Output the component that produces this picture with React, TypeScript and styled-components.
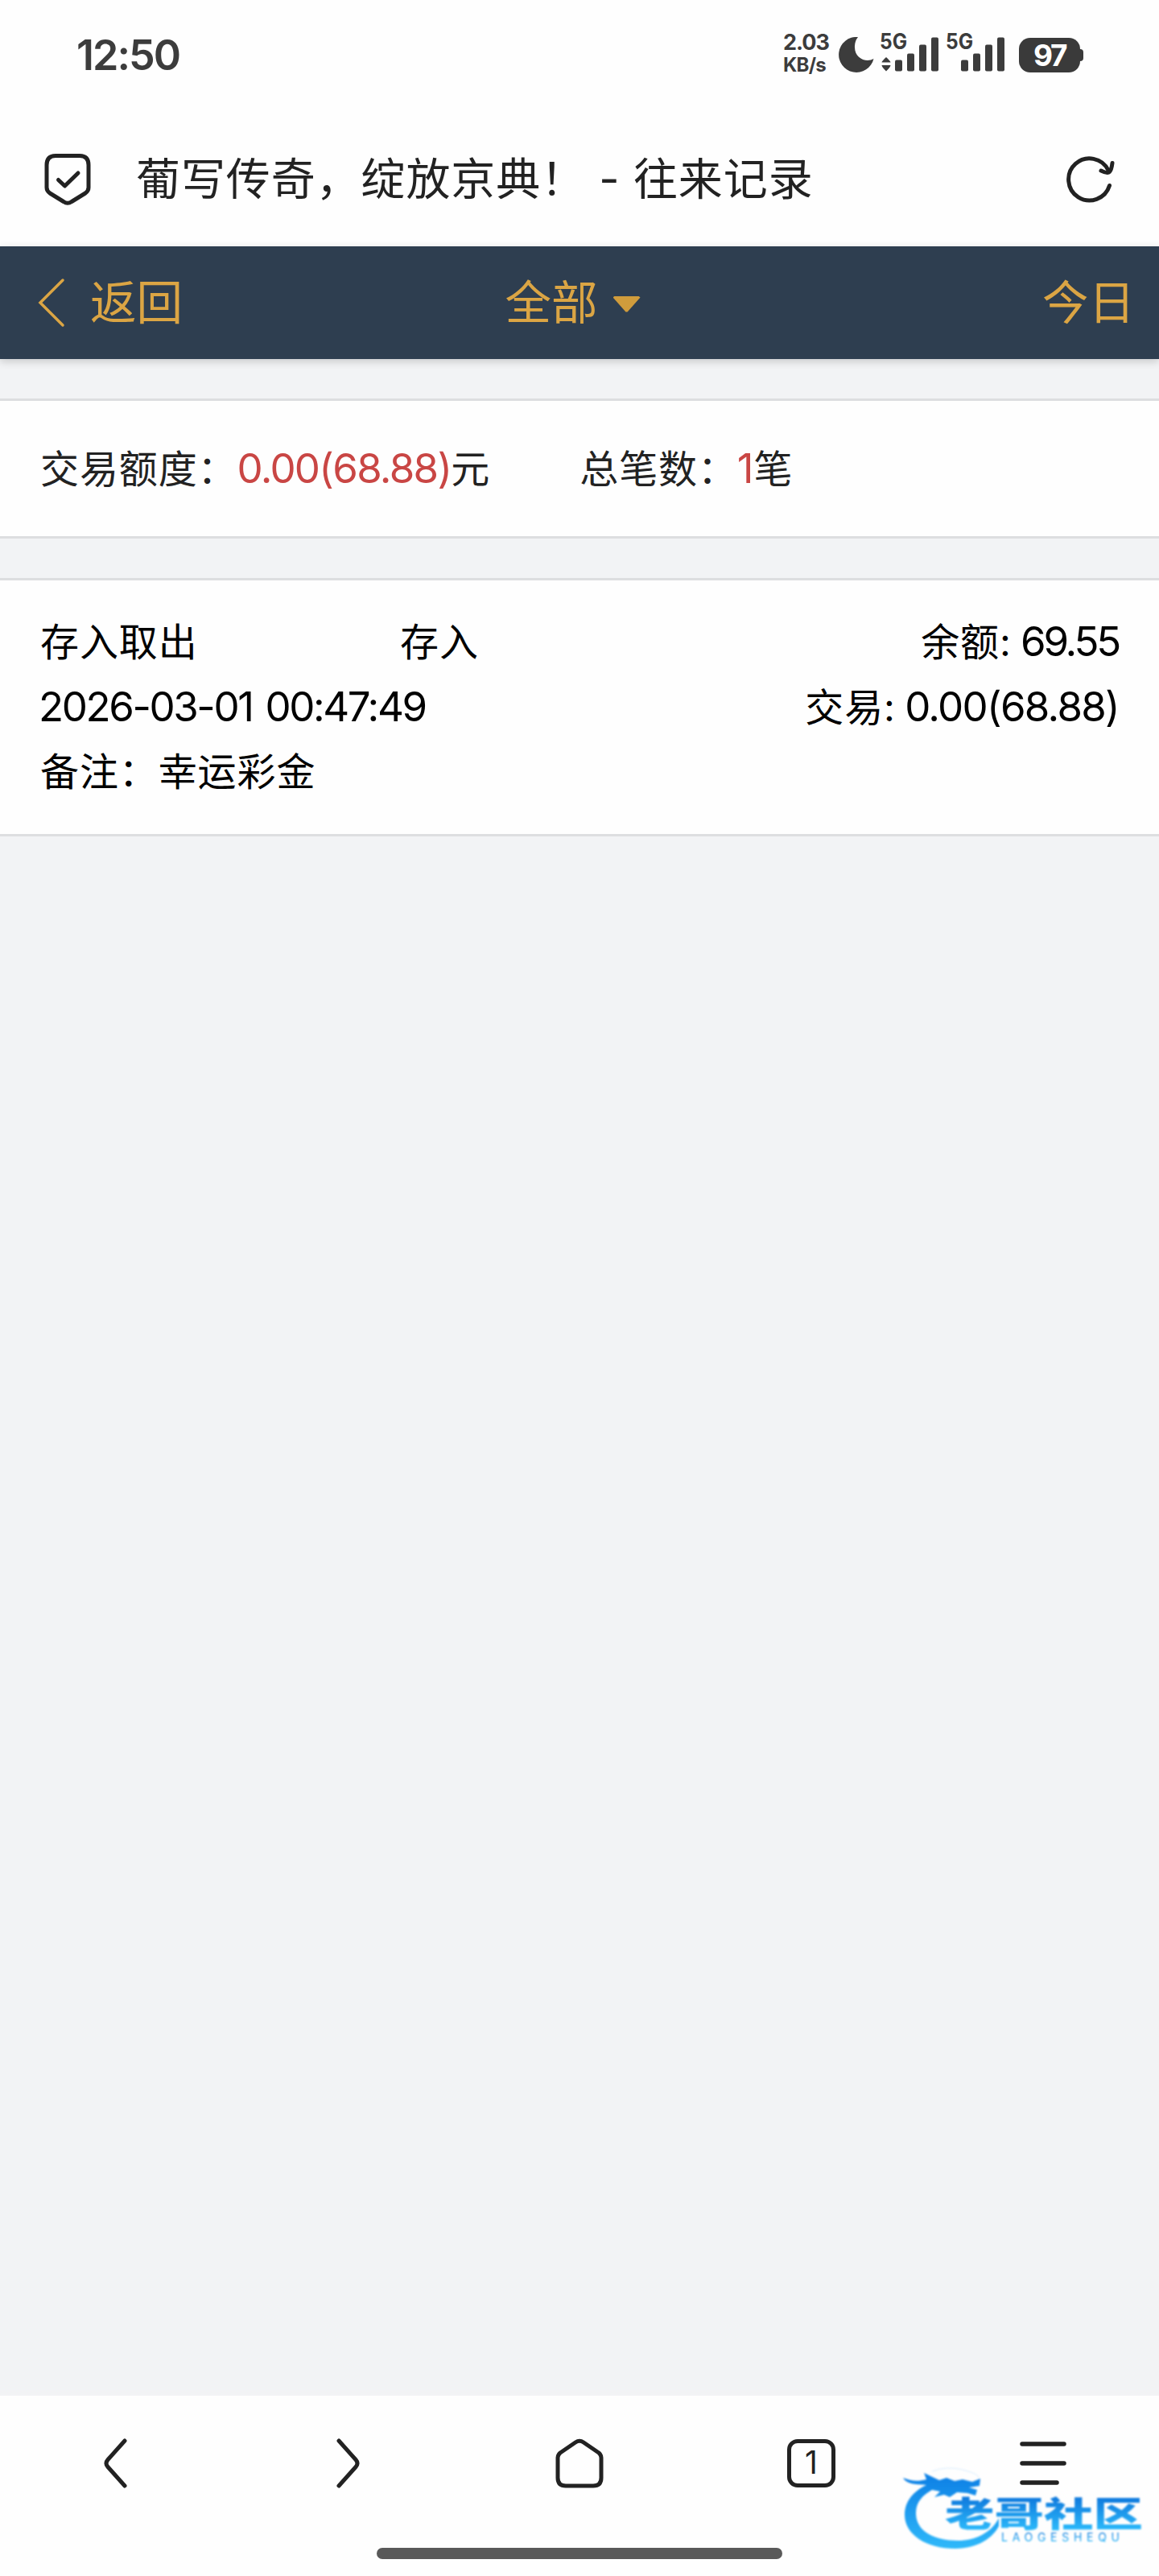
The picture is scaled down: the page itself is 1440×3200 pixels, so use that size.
import React from 'react';
import styled, { createGlobalStyle } from 'styled-components';

interface RecordItem {
  id: number;
  type: string;
  action: string;
  balance: string;
  time: string;
  amount: string;
  remark: string;
}

const records: RecordItem[] = [
  {
    id: 1,
    type: '存入取出',
    action: '存入',
    balance: '69.55',
    time: '2026-03-01 00:47:49',
    amount: '0.00(68.88)',
    remark: '幸运彩金',
  },
];

const BARS = [14, 22, 33, 42];

const Signal: React.FC<{ active?: boolean }> = ({ active }) => (
  <SignalIcon viewBox="0 -10 74 60">
    <text x="-1" y="20.5" textLength="34" lengthAdjust="spacingAndGlyphs">
      5G
    </text>
    {active && (
      <path d="M1.5 37.5Q1.5 36 7 31Q12.5 36 12.5 37.5ZM1.5 41Q1.5 43 7 48.5Q12.5 43 12.5 41Z" />
    )}
    {BARS.map((h, i) => (
      <rect key={h} x={18 + i * 15} y={48.5 - h} width="9" height={h} rx="2" />
    ))}
  </SignalIcon>
);

const StatusBar: React.FC = () => (
  <StatusWrapper>
    <Clock>12:50</Clock>
    <Speed>
      <span>2.03</span>
      <SpeedUnit>KB/s</SpeedUnit>
    </Speed>
    <Moon viewBox="0 0 44 44">
      <path d="M24 0A19 19 0 0 0 20 13C20 23 28 29 36 29Q40 29 43.5 27A22 22 0 1 1 24 0Z" />
    </Moon>
    <Signal active />
    <Signal />
    <Battery>97</Battery>
    <BatteryTip />
  </StatusWrapper>
);

//주소창
const AddressBar: React.FC = () => (
  <AddressWrapper>
    <LineIcon width="62" height="68" viewBox="0 0 62 68" $stroke={5}>
      <path d="M16 5.5H46Q57 5.5 57 17V45Q57 49 53 52L36 62.5Q31 66 26 62.5L9 52Q5 49 5 45V17Q5 5.5 16 5.5Z" />
      <path d="M19.5 35.5L27.5 43L44 27" />
    </LineIcon>
    <PageTitle>葡写传奇，绽放京典！ - 往来记录</PageTitle>
    <LineIcon width="64" height="64" viewBox="0 0 64 64" $stroke={5}>
      <path d="M56.5 40.500A26 26 0 1 1 55 21.500" />
      <path d="M46 22Q54 26 56.500 23.500T60 12.500" />
    </LineIcon>
  </AddressWrapper>
);

const Record: React.FC<{ item: RecordItem }> = ({ item }) => (
  <RecordCard>
    <Row>
      <TypeCell>{item.type}</TypeCell>
      <span>{item.action}</span>
      <RightCell>
        余额: <BalanceNum>{item.balance}</BalanceNum>
      </RightCell>
    </Row>
    <Row>
      <DateNum>{item.time}</DateNum>
      <RightCell>
        交易: <Num>{item.amount}</Num>
      </RightCell>
    </Row>
    <Row>备注：{item.remark}</Row>
  </RecordCard>
);

const Watermark: React.FC = () => (
  <WatermarkIcon viewBox="0 0 310 116">
    <defs>
      <linearGradient id="wm" x1="0" y1="0" x2="0" y2="1">
        <stop offset="0.1" stopColor="#0f78dc" />
        <stop offset="0.9" stopColor="#2cbafb" />
      </linearGradient>
      <linearGradient id="ring" gradientUnits="userSpaceOnUse" x1="0" y1="20" x2="0" y2="108">
        <stop offset="0" stopColor="#0f82e6" />
        <stop offset="1" stopColor="#2fb9fa" />
      </linearGradient>
    </defs>
    <path
      fill="url(#ring)"
      d="M31 29C14 37 4 50 4 66C4 90 30 108 67 108C95 108 114 94 121 80V70C112 88 92 98 70 98C40 98 18 86 18 64C18 50 26 42 38 35L48 37L41 44L53 41L60 44L69 38L82 39L92 42L94 35L84 32L97 30L98 21L88 25L76 22L66 24L56 20L47 23L28 14L31 22C20 25 12 24 2 20C7 29 20 28 31 29Z"
    />
    <path stroke="#d9ecfc" strokeWidth="1" fill="none" d="M38 12Q56 5 76 10T96 20" />
    <g fill="url(#wm)">
      <text
        x="54"
        y="80.5"
        fontSize="43"
        fontWeight="900"
        textLength="246"
        lengthAdjust="spacingAndGlyphs"
      >
        老哥社区
      </text>
      <text x="124" y="99" fontSize="14" textLength="147">
        LAOGESHEQU
      </text>
    </g>
  </WatermarkIcon>
);

const BottomBar: React.FC = () => (
  <BottomWrapper>
    <Tools>
      <LineIcon width="72" height="72" viewBox="0 0 72 72" $stroke={5}>
        <path d="M47 8L26 31.5Q22 36 26 40.5L47 64" />
      </LineIcon>
      <LineIcon width="72" height="72" viewBox="0 0 72 72" $stroke={5}>
        <path d="M25 8L46 31.5Q50 36 46 40.5L25 64" />
      </LineIcon>
      <LineIcon width="72" height="72" viewBox="0 0 72 72" $stroke={5}>
        <path d="M31 10Q36 6.5 41 10L60 23Q63 25.5 63 29V54Q63 64 53 64H19Q9 64 9 54V29Q9 25.5 12 23Z" />
      </LineIcon>
      <TabCount>1</TabCount>
      <LineIcon width="72" height="72" viewBox="0 0 72 72" $stroke={5.5}>
        <path d="M10 12H62M10 36H62M10 60H53" />
      </LineIcon>
    </Tools>
    <HomeIndicator />
    <Watermark />
  </BottomWrapper>
);

const App: React.FC = () => {
  return (
    <Screen>
      <GlobalStyle />
      <StatusBar />
      <AddressBar />
      <Header>
        <BackButton>
          <svg width="34" height="62" viewBox="0 0 34 62">
            <path d="M31 3L3 31L31 59" />
          </svg>
          返回
        </BackButton>
        <Filter>全部</Filter>
        <Today>今日</Today>
      </Header>
      <Content>
        <Summary>
          <SummaryItem>
            交易额度：<Red>0.00(68.88)</Red>元
          </SummaryItem>
          <SummaryItem>
            总笔数：<RedCount>1</RedCount>笔
          </SummaryItem>
        </Summary>
        {records.map(item => (
          <Record key={item.id} item={item} />
        ))}
      </Content>
      <BottomBar />
    </Screen>
  );
};

export default App;

const GlobalStyle = createGlobalStyle`
  * {
    box-sizing: border-box;
  }
  body {
    margin: 0;
    background: #f2f3f5;
    font-family: Inter, 'Noto Sans CJK SC', sans-serif;
  }
`;

const Screen = styled.div`
  width: 1440px;
  height: 3200px;
  display: flex;
  flex-direction: column;
  overflow: hidden;
`;

const StatusWrapper = styled.div`
  height: 136px;
  padding: 0 94px 0 95px;
  display: flex;
  align-items: center;
  background: #fefefe;
  color: #3c3c3c;
`;

const Clock = styled.div`
  flex: 1;
  font-size: 52px;
  font-weight: 600;
  letter-spacing: -2px;
`;

const Speed = styled.div`
  width: 57px;
  margin-right: 12px;
  padding-bottom: 3px;
  display: flex;
  flex-direction: column;
  font-size: 27px;
  font-weight: 700;
  line-height: 28px;
  letter-spacing: -1px;
  white-space: nowrap;
`;

const SpeedUnit = styled.span`
  font-size: 24px;
  letter-spacing: -0.7px;
`;

const Moon = styled.svg`
  width: 44px;
  height: 44px;
  margin-right: 8px;
  fill: #3c3c3c;
`;

const SignalIcon = styled.svg`
  width: 74px;
  height: 60px;
  margin-right: 8px;
  margin-top: -16px;
  overflow: visible;
  fill: #3c3c3c;
  font-size: 27px;
  font-weight: 700;
`;

const Battery = styled.div`
  width: 76px;
  height: 43px;
  margin-left: 8px;
  border-radius: 14px;
  background: #3a3a3a;
  color: #fff;
  font-size: 37px;
  font-weight: 700;
  line-height: 43px;
  letter-spacing: -2.5px;
  text-align: center;
`;

const BatteryTip = styled.div`
  width: 4px;
  height: 15px;
  border-radius: 0 4px 4px 0;
  background: #3a3a3a;
`;

const AddressWrapper = styled.div`
  height: 170px;
  padding: 2px 54px 0 53px;
  display: flex;
  align-items: center;
  background: #fefefe;
`;

const LineIcon = styled.svg<{ $stroke: number }>`
  flex: none;
  fill: none;
  stroke: #222;
  stroke-width: ${props => props.$stroke}px;
  stroke-linecap: round;
  stroke-linejoin: round;
`;

const PageTitle = styled.div`
  flex: 1;
  margin-left: 54px;
  font-size: 55px;
  line-height: 64px;
  letter-spacing: 0.9px;
  color: #222;
  white-space: nowrap;
`;

const Header = styled.header`
  position: relative;
  flex: none;
  height: 140px;
  padding: 0 30px 0 47px;
  display: grid;
  grid-template-columns: 1fr auto 1fr;
  align-items: center;
  background: #2e3e50;
  box-shadow: 0 3px 10px rgba(0, 0, 0, 0.18);
  color: #dba544;
  font-size: 57.5px;
  line-height: 64px;
`;

const BackButton = styled.div`
  display: flex;
  align-items: center;
  gap: 31px;

  svg {
    fill: none;
    stroke: #dba544;
    stroke-width: 3.5px;
    stroke-linecap: round;
  }
`;

const Filter = styled.div`
  margin-right: 34px;
  display: flex;
  align-items: center;
  gap: 19px;

  &::after {
    content: '';
    width: 34px;
    height: 20px;
    margin-top: 3px;
    background: #d09c3c;
    clip-path: polygon(7% 0, 93% 0, 100% 10%, 53% 100%, 47% 100%, 0 10%);
  }
`;

const Today = styled.div`
  text-align: right;
`;

const Content = styled.main`
  flex: 1;
  padding-top: 49px;
  display: flex;
  flex-direction: column;
  gap: 49px;
  font-size: 48px;
  letter-spacing: 0.9px;
`;

const Card = styled.section`
  background: #fefefe;
  border-top: 3px solid #dddee0;
  border-bottom: 3px solid #dddee0;
  padding: 0 50px;
`;

const Summary = styled(Card)`
  height: 174px;
  display: flex;
  align-items: center;
  gap: 111px;
  color: #222;
  line-height: 80px;
`;

const SummaryItem = styled.div`
  white-space: nowrap;
`;

const Num = styled.span`
  font-size: 51px;
  letter-spacing: -1.7px;
`;

const BalanceNum = styled(Num)`
  letter-spacing: -3.2px;
`;

const DateNum = styled(Num)`
  margin-left: -2px;
  letter-spacing: -2.4px;
  word-spacing: 4px;
`;

const Red = styled(Num)`
  color: #c94644;
`;

const RedCount = styled(Red)`
  letter-spacing: 0;
`;

const RecordCard = styled(Card)`
  height: 321px;
  padding-top: 36.5px;
  color: #000;
`;

const Row = styled.div`
  height: 80.5px;
  display: flex;
  align-items: center;
  line-height: 80px;
  white-space: nowrap;
`;

const TypeCell = styled.span`
  width: 447px;
`;

const RightCell = styled.span`
  margin-left: auto;
  word-spacing: -3px;
`;

const BottomWrapper = styled.footer`
  position: relative;
  height: 224px;
  padding-top: 48px;
  display: flex;
  flex-direction: column;
  align-items: center;
  background: #fefefe;
`;

const Tools = styled.div`
  width: 100%;
  display: grid;
  grid-template-columns: repeat(5, 1fr);
  justify-items: center;
  align-items: center;
`;

const TabCount = styled.div`
  width: 60px;
  height: 60px;
  border: 5px solid #222;
  border-radius: 13px;
  color: #222;
  font-size: 39px;
  line-height: 48px;
  text-align: center;
`;

const HomeIndicator = styled.div`
  width: 504px;
  height: 14px;
  margin-top: 69px;
  border-radius: 7px;
  background: #595959;
`;

/* floats over the bottom bar corner */
const WatermarkIcon = styled.svg`
  position: absolute;
  right: 10px;
  bottom: 26px;
  width: 310px;
  height: 116px;
  filter: blur(0.8px);
`;
